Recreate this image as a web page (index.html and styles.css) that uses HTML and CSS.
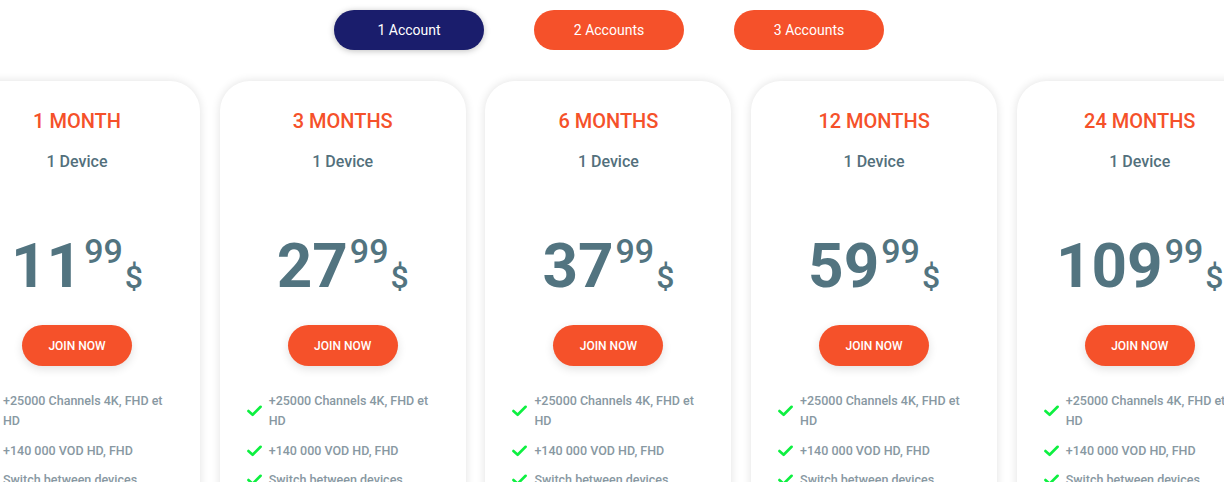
FILE: index.html
```html
<!DOCTYPE html>
<html lang="en">
<head>
<meta charset="utf-8">
<title>Pricing</title>
<link rel="stylesheet" href="styles.css">
</head>
<body>
<div class="page">
  <nav class="tabs">
    <button class="tab tab-active">1 Account</button>
    <button class="tab">2 Accounts</button>
    <button class="tab">3 Accounts</button>
  </nav>
  <div class="viewport">
    <div class="track">
      <div class="card">
        <h3 class="period">1 MONTH</h3>
        <p class="devices">1 Device</p>
        <div class="price"><span class="int">11</span><span class="cents">99</span><span class="cur">$</span></div>
        <a class="join" href="#">JOIN NOW</a>
        <ul class="features">
          <li><svg class="check" viewBox="0 0 16 12"><polyline points="1.5,6 6,10 14.5,1.5"/></svg><span>+25000 Channels 4K, FHD et HD</span></li>
          <li><svg class="check" viewBox="0 0 16 12"><polyline points="1.5,6 6,10 14.5,1.5"/></svg><span>+140 000 VOD HD, FHD</span></li>
          <li><svg class="check" viewBox="0 0 16 12"><polyline points="1.5,6 6,10 14.5,1.5"/></svg><span>Switch between devices</span></li>
        </ul>
      </div>
      <div class="card">
        <h3 class="period">3 MONTHS</h3>
        <p class="devices">1 Device</p>
        <div class="price"><span class="int">27</span><span class="cents">99</span><span class="cur">$</span></div>
        <a class="join" href="#">JOIN NOW</a>
        <ul class="features">
          <li><svg class="check" viewBox="0 0 16 12"><polyline points="1.5,6 6,10 14.5,1.5"/></svg><span>+25000 Channels 4K, FHD et HD</span></li>
          <li><svg class="check" viewBox="0 0 16 12"><polyline points="1.5,6 6,10 14.5,1.5"/></svg><span>+140 000 VOD HD, FHD</span></li>
          <li><svg class="check" viewBox="0 0 16 12"><polyline points="1.5,6 6,10 14.5,1.5"/></svg><span>Switch between devices</span></li>
        </ul>
      </div>
      <div class="card">
        <h3 class="period">6 MONTHS</h3>
        <p class="devices">1 Device</p>
        <div class="price"><span class="int">37</span><span class="cents">99</span><span class="cur">$</span></div>
        <a class="join" href="#">JOIN NOW</a>
        <ul class="features">
          <li><svg class="check" viewBox="0 0 16 12"><polyline points="1.5,6 6,10 14.5,1.5"/></svg><span>+25000 Channels 4K, FHD et HD</span></li>
          <li><svg class="check" viewBox="0 0 16 12"><polyline points="1.5,6 6,10 14.5,1.5"/></svg><span>+140 000 VOD HD, FHD</span></li>
          <li><svg class="check" viewBox="0 0 16 12"><polyline points="1.5,6 6,10 14.5,1.5"/></svg><span>Switch between devices</span></li>
        </ul>
      </div>
      <div class="card">
        <h3 class="period">12 MONTHS</h3>
        <p class="devices">1 Device</p>
        <div class="price"><span class="int">59</span><span class="cents">99</span><span class="cur">$</span></div>
        <a class="join" href="#">JOIN NOW</a>
        <ul class="features">
          <li><svg class="check" viewBox="0 0 16 12"><polyline points="1.5,6 6,10 14.5,1.5"/></svg><span>+25000 Channels 4K, FHD et HD</span></li>
          <li><svg class="check" viewBox="0 0 16 12"><polyline points="1.5,6 6,10 14.5,1.5"/></svg><span>+140 000 VOD HD, FHD</span></li>
          <li><svg class="check" viewBox="0 0 16 12"><polyline points="1.5,6 6,10 14.5,1.5"/></svg><span>Switch between devices</span></li>
        </ul>
      </div>
      <div class="card">
        <h3 class="period">24 MONTHS</h3>
        <p class="devices">1 Device</p>
        <div class="price"><span class="int">109</span><span class="cents">99</span><span class="cur">$</span></div>
        <a class="join" href="#">JOIN NOW</a>
        <ul class="features">
          <li><svg class="check" viewBox="0 0 16 12"><polyline points="1.5,6 6,10 14.5,1.5"/></svg><span>+25000 Channels 4K, FHD et HD</span></li>
          <li><svg class="check" viewBox="0 0 16 12"><polyline points="1.5,6 6,10 14.5,1.5"/></svg><span>+140 000 VOD HD, FHD</span></li>
          <li><svg class="check" viewBox="0 0 16 12"><polyline points="1.5,6 6,10 14.5,1.5"/></svg><span>Switch between devices</span></li>
        </ul>
      </div>
    </div>
  </div>
</div>
</body>
</html>
```
FILE: styles.css
```css
* { box-sizing: border-box; }
html, body {
  margin: 0;
  padding: 0;
  background: #ffffff;
  overflow: hidden;
  height: 482px;
}
body {
  font-family: Roboto, "Liberation Sans", Arial, sans-serif;
}
.page {
  width: 1224px;
}
.tabs {
  display: flex;
  justify-content: center;
  gap: 50px;
  padding-top: 10px;
  padding-right: 6px;
}
.tab {
  width: 150px;
  height: 40px;
  border: none;
  border-radius: 20px;
  background: #f5512a;
  color: #ffffff;
  font-family: Roboto, "Liberation Sans", Arial, sans-serif;
  font-size: 14px;
  font-weight: 400;
  cursor: pointer;
  padding: 0;
}
.tab-active {
  background: #1a1d6c;
  box-shadow: 0 1px 6px rgba(0, 0, 0, 0.25);
}
.viewport {
  padding-top: 31px;
}
.track {
  display: flex;
  gap: 19.7px;
  margin-left: -46px;
}
.card {
  flex: 0 0 246px;
  height: 480px;
  background: #ffffff;
  border-radius: 30px;
  box-shadow: 0 0 10px rgba(0, 0, 0, 0.12);
  display: flex;
  flex-direction: column;
  align-items: center;
  padding-top: 28px;
}
.period {
  margin: 0;
  font-size: 20px;
  line-height: 24px;
  font-weight: 500;
  color: #f5512a;
}
.devices {
  margin: 18px 0 0;
  font-size: 16px;
  line-height: 22px;
  font-weight: 500;
  color: #53707c;
}
.price {
  margin-top: 58px;
  height: 70px;
  display: flex;
  align-items: baseline;
  color: #527480;
  line-height: 70px;
}
.int {
  font-size: 62px;
  font-weight: 700;
}
.cents {
  font-size: 34px;
  font-weight: 500;
  position: relative;
  top: -24px;
  margin-left: 2px;
}
.cur {
  font-size: 32px;
  font-weight: 500;
  margin-left: 2px;
  position: relative;
  top: 1px;
}
.join {
  margin-top: 24px;
  width: 110px;
  height: 41px;
  border-radius: 21px;
  background: #f5512a;
  color: #ffffff;
  font-size: 12px;
  font-weight: 500;
  text-decoration: none;
  display: flex;
  align-items: center;
  justify-content: center;
  box-shadow: 0 3px 10px rgba(0, 0, 0, 0.12);
}
.features {
  list-style: none;
  margin: 25px 0 0;
  padding: 0 27px;
  width: 100%;
}
.features li {
  display: flex;
  align-items: center;
  gap: 7px;
  font-size: 12.5px;
  font-weight: 500;
  line-height: 20px;
  color: #8898a2;
  margin-bottom: 9.5px;
}
.check {
  flex: 0 0 15px;
  width: 15px;
  height: 12px;
  fill: none;
  stroke: #0df040;
  stroke-width: 2.8;
  stroke-linecap: round;
  stroke-linejoin: round;
}
```
